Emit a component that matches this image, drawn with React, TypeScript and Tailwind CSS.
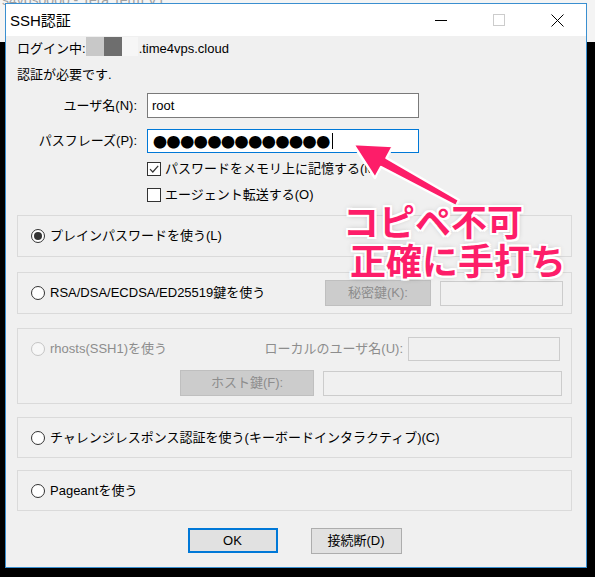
import React from "react";

function Radio({ checked = false, disabled = false }: { checked?: boolean; disabled?: boolean }) {
  return (
    <span
      className={
        disabled
          ? "w-[14px] h-[14px] rounded-full border border-[#c4c4c4] bg-[#f7f7f7] flex items-center justify-center shrink-0"
          : "w-[14px] h-[14px] rounded-full border border-[#333333] bg-white flex items-center justify-center shrink-0"
      }
    >
      {checked && <span className="w-[8px] h-[8px] rounded-full bg-[#333333]" />}
    </span>
  );
}

function Check({ checked = false }: { checked?: boolean }) {
  return (
    <span className="w-[14px] h-[14px] border border-[#333333] bg-white flex items-center justify-center shrink-0">
      {checked && (
        <svg width="12" height="12" viewBox="0 0 12 12">
          <path d="M2 6.2 L4.8 9 L10.2 2.8" fill="none" stroke="#333333" strokeWidth="1.2" />
        </svg>
      )}
    </span>
  );
}

export default function App() {
  return (
    <div className="relative w-[595px] h-[577px] overflow-hidden bg-black font-['Liberation_Sans','Noto_Sans_CJK_JP',sans-serif] text-black">
      {/* background window remnant */}
      <div className="absolute left-0 top-0 w-full h-[42px] bg-[#f4f4f4] overflow-hidden">
        <div className="absolute left-[2px] top-[-10px] text-[14px] text-[#a0a0a0] whitespace-nowrap">
          s4vps0000 - Tera Term VT
        </div>
      </div>

      {/* dialog window */}
      <div className="absolute left-[5px] top-[3px] w-[582px] h-[565px] border border-[#3a8fd0] bg-[#f0f0f0] flex flex-col">
        {/* title bar */}
        <div className="h-[32px] bg-white flex items-center shrink-0">
          <span className="pl-[4px] text-[15px] leading-none">SSH認証</span>
          <div className="ml-auto flex h-full">
            <div className="w-[58px] h-full flex items-center justify-center">
              <div className="w-[12px] h-px bg-black" />
            </div>
            <div className="w-[58px] h-full flex items-center justify-center">
              <div className="w-[12px] h-[12px] border border-[#cccccc]" />
            </div>
            <div className="w-[58px] h-full flex items-center justify-center">
              <svg width="13" height="13" viewBox="0 0 13 13">
                <path d="M0.5 0.5 L12.5 12.5 M12.5 0.5 L0.5 12.5" stroke="#000" strokeWidth="1" />
              </svg>
            </div>
          </div>
        </div>

        {/* body */}
        <div className="flex flex-col pl-[11px] pr-[14px] text-[13px]">
          {/* login line */}
          <div className="flex items-start h-[21px] pt-[1px]">
            <span className="leading-[20px] mt-[2px]">ログイン中:</span>
            <span className="w-[18px] h-[19px] bg-[#c8c8c8]" />
            <span className="w-[18px] h-[19px] bg-[#6e6e6e]" />
            <span className="w-[16px] h-[19px] bg-[#f6f6f6]" />
            <span className="leading-[20px] mt-[2px] ml-[1px]">.time4vps.cloud</span>
          </div>
          <div className="mt-[9px] leading-[18px] h-[18px]">認証が必要です.</div>

          {/* user name */}
          <div className="mt-[9px] flex items-center h-[25px]">
            <span className="w-[120px] text-right">ユーザ名(N):</span>
            <div className="ml-[10px] w-[272px] h-[25px] border border-[#7a7a7a] bg-white flex items-center pl-[4px]">
              root
            </div>
          </div>

          {/* passphrase */}
          <div className="mt-[11px] flex items-center h-[24px]">
            <span className="w-[120px] text-right">パスフレーズ(P):</span>
            <div className="ml-[10px] w-[272px] h-[24px] border border-[#0078d7] bg-white flex items-center pl-[5px]">
              <span className="font-['Noto_Sans_CJK_JP',sans-serif] text-[14px] leading-none tracking-[-0.4px]">
                ●●●●●●●●●●●●●
              </span>
              <span className="ml-[2px] w-px h-[16px] bg-black" />
            </div>
          </div>

          {/* checkboxes */}
          <div className="mt-[7px] flex items-center h-[18px] pl-[130px] gap-[4px]">
            <Check checked />
            <span>パスワードをメモリ上に記憶する(M)</span>
          </div>
          <div className="mt-[8px] flex items-center h-[18px] pl-[130px] gap-[4px]">
            <Check />
            <span>エージェント転送する(O)</span>
          </div>

          {/* group 1 */}
          <div className="mt-[11px] h-[42px] border border-[#dadada] flex items-center pl-[13px] gap-[5px]">
            <Radio checked />
            <span>プレインパスワードを使う(L)</span>
          </div>

          {/* group 2 */}
          <div className="mt-[15px] h-[42px] border border-[#dadada] flex items-center pl-[13px] pr-[8px]">
            <Radio />
            <span className="ml-[5px]">RSA/DSA/ECDSA/ED25519鍵を使う</span>
            <div className="ml-auto w-[106px] h-[26px] bg-[#cccccc] border border-[#bfbfbf] flex items-center justify-center text-[#8d8d8d]">
              秘密鍵(K):
            </div>
            <div className="ml-[9px] w-[123px] h-[25px] border border-[#cccccc] bg-[#f0f0f0]" />
          </div>

          {/* group 3 */}
          <div className="mt-[14px] h-[76px] border border-[#dadada] flex flex-col pt-[8px]">
            <div className="flex items-center h-[24px] pl-[13px] pr-[11px]">
              <Radio disabled />
              <span className="ml-[5px] text-[#8d8d8d]">rhosts(SSH1)を使う</span>
              <span className="ml-auto text-[#8d8d8d]">ローカルのユーザ名(U):</span>
              <div className="ml-[5px] w-[152px] h-[24px] border border-[#cccccc] bg-[#f0f0f0]" />
            </div>
            <div className="mt-[9px] flex items-center h-[26px] pl-[162px]">
              <div className="w-[134px] h-[26px] bg-[#cccccc] border border-[#bfbfbf] flex items-center justify-center text-[#8d8d8d]">
                ホスト鍵(F):
              </div>
              <div className="ml-[9px] w-[239px] h-[25px] border border-[#cccccc] bg-[#f0f0f0]" />
            </div>
          </div>

          {/* group 4 */}
          <div className="mt-[13px] h-[41px] border border-[#dadada] flex items-center pl-[13px] gap-[5px]">
            <Radio />
            <span>チャレンジレスポンス認証を使う(キーボードインタラクティブ)(C)</span>
          </div>

          {/* group 5 */}
          <div className="mt-[12px] h-[41px] border border-[#dadada] flex items-center pl-[13px] gap-[5px]">
            <Radio />
            <span>Pageantを使う</span>
          </div>

          {/* buttons */}
          <div className="mt-[17px] flex justify-center gap-[33px]">
            <button className="w-[90px] h-[25px] border-2 border-[#0078d7] bg-[#e1e1e1] text-[13px] flex items-center justify-center">
              OK
            </button>
            <button className="w-[91px] h-[26px] border border-[#adadad] bg-[#e1e1e1] text-[13px] flex items-center justify-center">
              接続断(D)
            </button>
          </div>
        </div>
      </div>

      {/* annotation arrow */}
      <svg className="absolute left-0 top-0 pointer-events-none" width="595" height="577" viewBox="0 0 595 577">
        <polygon
          points="353,144 393,146 386.5,158 459,200 456,206 381,167 375,178"
          fill="#fd1d69"
          stroke="#ffffff"
          strokeWidth="2.5"
          strokeLinejoin="round"
        />
      </svg>

      {/* annotation text */}
      <div className="absolute left-[343px] top-[202px] text-[36px] leading-none font-bold text-[#fd1d69] font-['Noto_Sans_CJK_JP',sans-serif] whitespace-nowrap [text-shadow:2px_0_0_#fff,-2px_0_0_#fff,0_2px_0_#fff,0_-2px_0_#fff,2px_2px_0_#fff,-2px_-2px_0_#fff,2px_-2px_0_#fff,-2px_2px_0_#fff,0_0_6px_rgba(0,0,0,0.3)]">
        コピペ不可
      </div>
      <div className="absolute left-[350px] top-[241px] text-[36px] leading-none font-bold text-[#fd1d69] font-['Noto_Sans_CJK_JP',sans-serif] whitespace-nowrap [text-shadow:2px_0_0_#fff,-2px_0_0_#fff,0_2px_0_#fff,0_-2px_0_#fff,2px_2px_0_#fff,-2px_-2px_0_#fff,2px_-2px_0_#fff,-2px_2px_0_#fff,0_0_6px_rgba(0,0,0,0.3)]">
        正確に手打ち
      </div>
    </div>
  );
}
